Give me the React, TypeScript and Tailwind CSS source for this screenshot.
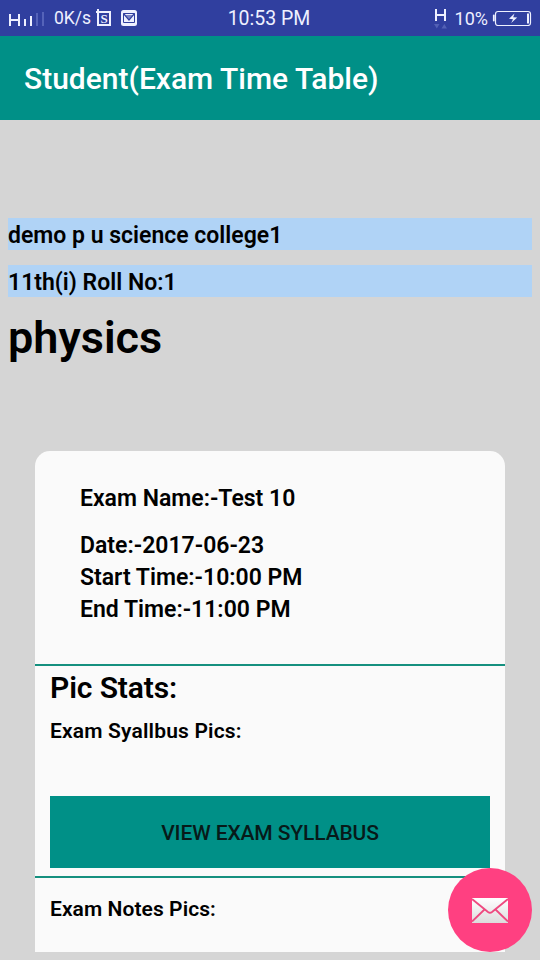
const examDetails = ["Date:-2017-06-23", "Start Time:-10:00 PM", "End Time:-11:00 PM"]

function SignalIcon() {
  return (
    <svg width="37" height="16" viewBox="0 0 37 16" fill="none">
      <path d="M2 2v12M11 2v12M2 8h9" stroke="#eef0ff" strokeWidth="2" />
      <path d="M17 7v7M23 4v10" stroke="#eef0ff" strokeWidth="2" />
      <path d="M29 1v13M35 0v14" stroke="#5f6dc0" strokeWidth="1.6" />
    </svg>
  )
}

function ScreenshotIcon() {
  return (
    <svg width="16" height="18" viewBox="0 0 16 18" fill="none">
      <path d="M0 3h14v13H2V0" stroke="#eef0ff" strokeWidth="2" />
      <text x="4.5" y="14" fontSize="13" fontFamily="Liberation Serif, serif" fontWeight="bold" fill="#eef0ff">
        S
      </text>
    </svg>
  )
}

function MailBoxIcon() {
  return (
    <svg width="16" height="16" viewBox="0 0 16 16" fill="none">
      <rect width="16" height="16" rx="2.5" fill="#eef0ff" />
      <path d="M2.5 3.5h11v9h-11z" stroke="#303f9f" />
      <path d="M2.5 3.5L8 10l5.5-6.5" stroke="#303f9f" strokeWidth="1.2" />
      <path d="M4.5 5h7L8 9.5z" fill="#303f9f" fillOpacity="0.6" />
    </svg>
  )
}

function NetworkIcon() {
  return (
    <svg width="14" height="21" viewBox="0 0 14 21" fill="none">
      <path d="M2 0v12M11 0v12M2 6h9" stroke="#eef0ff" strokeWidth="2" />
      <path d="M0 15h5.5l-2.7 4.5zM7.5 19.5H13L10.3 15z" fill="#5260b5" />
    </svg>
  )
}

function BatteryIcon() {
  return (
    <svg width="40" height="16" viewBox="0 0 40 16" fill="none">
      <path d="M1.8 5.5v5" stroke="#eef0ff" strokeWidth="1.8" strokeLinecap="round" />
      <rect x="3.5" y="1.5" width="35" height="14" rx="2.5" stroke="#eef0ff" strokeWidth="1.2" />
      <path d="M36 3.5v10" stroke="#eef0ff" strokeWidth="2" />
      <path d="M22.5 3.5L17 8.8l4 .4-1.8 3.8 6-5.4-4-.4z" fill="#eef0ff" />
    </svg>
  )
}

function EnvelopeIcon() {
  return (
    <svg width="36" height="25" viewBox="0 0 36 25" fill="none">
      <defs>
        <linearGradient id="envelope" x1="0" y1="0" x2="0" y2="1">
          <stop offset="0" stopColor="#ffffff" />
          <stop offset="1" stopColor="#dcdcdc" />
        </linearGradient>
      </defs>
      <rect width="36" height="25" fill="url(#envelope)" />
      <path d="M0 1l16 13q2 1.5 4 0L36 1M0 23.5l12.5-12M36 23.5l-12.5-12" stroke="#ee4a80" strokeWidth="1.8" />
    </svg>
  )
}

export default function App() {
  return (
    <div className="relative flex h-[960px] w-[540px] flex-col overflow-hidden bg-[#d5d5d5] font-[Roboto,sans-serif] text-black">
      <div className="grid h-9 shrink-0 grid-cols-[1fr_auto_1fr] items-center bg-[#303f9f] pr-2 pl-2 text-[#eef0ff]">
        <div className="flex items-center">
          <div className="mt-1">
            <SignalIcon />
          </div>
          <span className="ml-[9px] text-[17.5px]">0K/s</span>
          <div className="ml-[5px]">
            <ScreenshotIcon />
          </div>
          <div className="ml-[9px]">
            <MailBoxIcon />
          </div>
        </div>
        <span className="pt-0.5 pr-0.5 text-[19.5px]">10:53 PM</span>
        <div className="flex items-center justify-end">
          <div className="mt-[3px] mr-[7px]">
            <NetworkIcon />
          </div>
          <span className="text-[18px]">10%</span>
          <div className="ml-1">
            <BatteryIcon />
          </div>
        </div>
      </div>

      <header className="flex h-[84px] shrink-0 items-center bg-[#009087] px-6">
        <h1 className="text-[30px] font-medium text-white">Student(Exam Time Table)</h1>
      </header>

      <main className="flex flex-col pt-[98px]">
        <div className="flex flex-col gap-[15px] px-2 text-[23px] leading-[36px] font-semibold">
          <p className="h-8 bg-[#b0d3f6]">demo p u science college1</p>
          <p className="h-8 bg-[#b0d3f6]">11th(i) Roll No:1</p>
        </div>
        <h2 className="mt-[11px] px-2 text-[45px] leading-[60px] font-semibold">physics</h2>

        <section className="mx-[35px] mt-[83px] flex h-[501px] flex-col rounded-t-[15px] bg-[#fafafa]">
          <div className="h-[213px] shrink-0 px-[45px] pt-[30px] text-[23px] leading-[36px] font-semibold">
            <p className="mb-[15px] h-8">Exam Name:-Test 10</p>
            {examDetails.map((detail) => (
              <p key={detail} className="h-8">
                {detail}
              </p>
            ))}
          </div>

          <div className="h-[214px] shrink-0 border-y-2 border-[#15907f] px-[15px]">
            <h3 className="h-[42px] text-[30px] leading-[43px] font-semibold tracking-[-0.12px]">Pic Stats:</h3>
            <p className="mt-2 text-[21px] leading-[30px] font-semibold tracking-[0.17px]">Exam Syallbus Pics:</p>
            <button className="mt-[50px] h-[72px] w-full bg-[#009087] pt-[3px] text-[21px] font-medium tracking-[-0.12px] text-[#071a19]">
              VIEW EXAM SYLLABUS
            </button>
          </div>

          <div className="px-[15px] pt-4">
            <p className="text-[21px] leading-[30px] font-semibold tracking-[0.07px]">Exam Notes Pics:</p>
          </div>
        </section>
      </main>

      <button className="absolute right-2 bottom-2 flex size-[84px] items-center justify-center rounded-full bg-[#ff4081]">
        <EnvelopeIcon />
      </button>
    </div>
  )
}
